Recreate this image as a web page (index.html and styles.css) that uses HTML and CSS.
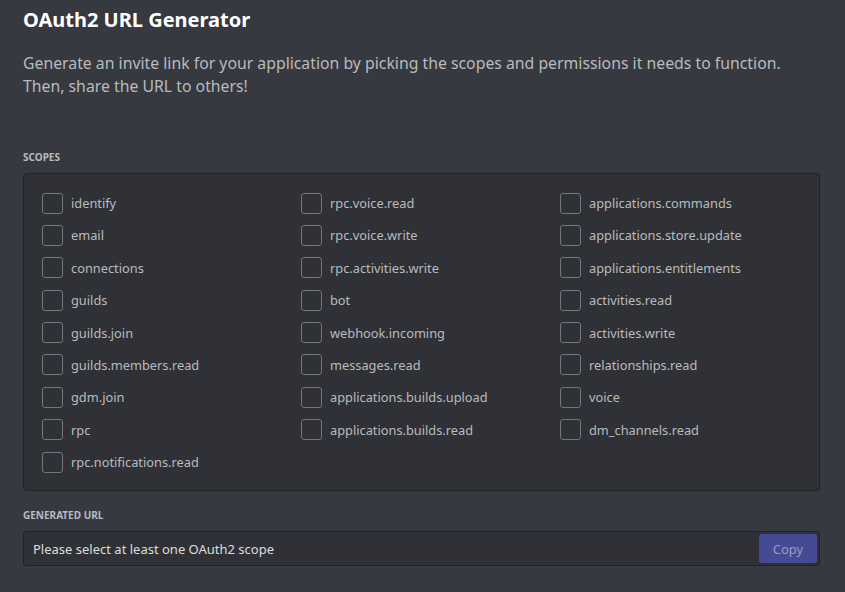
FILE: index.html
```html
<!DOCTYPE html>
<html lang="en">
<head>
  <meta charset="UTF-8" />
  <title>OAuth2 URL Generator</title>
  <link rel="stylesheet" href="styles.css">
</head>
<body>
  <div class="page">
    <h1>OAuth2 URL Generator</h1>
    <p class="desc">Generate an invite link for your application by picking the scopes and permissions it needs to function. Then, share the URL to others!</p>

    <h5 class="section-title scopes-title">Scopes</h5>
    <div class="scopes">
      <label class="scope"><span class="box"></span>identify</label>
      <label class="scope"><span class="box"></span>rpc.voice.read</label>
      <label class="scope"><span class="box"></span>applications.commands</label>
      <label class="scope"><span class="box"></span>email</label>
      <label class="scope"><span class="box"></span>rpc.voice.write</label>
      <label class="scope"><span class="box"></span>applications.store.update</label>
      <label class="scope"><span class="box"></span>connections</label>
      <label class="scope"><span class="box"></span>rpc.activities.write</label>
      <label class="scope"><span class="box"></span>applications.entitlements</label>
      <label class="scope"><span class="box"></span>guilds</label>
      <label class="scope"><span class="box"></span>bot</label>
      <label class="scope"><span class="box"></span>activities.read</label>
      <label class="scope"><span class="box"></span>guilds.join</label>
      <label class="scope"><span class="box"></span>webhook.incoming</label>
      <label class="scope"><span class="box"></span>activities.write</label>
      <label class="scope"><span class="box"></span>guilds.members.read</label>
      <label class="scope"><span class="box"></span>messages.read</label>
      <label class="scope"><span class="box"></span>relationships.read</label>
      <label class="scope"><span class="box"></span>gdm.join</label>
      <label class="scope"><span class="box"></span>applications.builds.upload</label>
      <label class="scope"><span class="box"></span>voice</label>
      <label class="scope"><span class="box"></span>rpc</label>
      <label class="scope"><span class="box"></span>applications.builds.read</label>
      <label class="scope"><span class="box"></span>dm_channels.read</label>
      <label class="scope"><span class="box"></span>rpc.notifications.read</label>
    </div>

    <h5 class="section-title url-title">Generated URL</h5>
    <div class="url-field">
      <span class="url-text">Please select at least one OAuth2 scope</span>
      <button type="button" class="copy-button" disabled>Copy</button>
    </div>
  </div>
</body>
</html>
```

FILE: styles.css
```css
body {
  margin: 0;
  background-color: #36393f;
  font-family: 'Noto Sans', 'Open Sans', sans-serif;
  color: #dcddde;
}
.page {
  padding: 5px 25px 0 23px;
}
h1 {
  margin: 0;
  font-size: 20px;
  line-height: 30px;
  font-weight: bold;
  color: #ffffff;
}
.desc {
  margin: 17px 0 0 0;
  font-size: 15.8px;
  line-height: 23px;
  color: #b9bbbe;
}
.section-title {
  margin: 0 0 8px 0;
  font-size: 10px;
  line-height: 16px;
  font-weight: bold;
  text-transform: uppercase;
  color: #b9bbbe;
}
.scopes-title {
  margin-top: 51px;
}
.url-title {
  margin-top: 16px;
  margin-bottom: 8px;
}
.scopes {
  display: grid;
  grid-template-columns: repeat(3, 259px);
  grid-auto-rows: 24px;
  row-gap: 8.4px;
  padding: 17px 0 16px 18px;
  background-color: #2f3136;
  border: 1px solid #202225;
  border-radius: 4px;
}
.scope {
  display: flex;
  align-items: center;
  gap: 8px;
  font-size: 12.8px;
  color: #b9bbbe;
}
.box {
  box-sizing: border-box;
  width: 21px;
  height: 21px;
  border: 1px solid #72767d;
  border-radius: 3px;
}
.url-field {
  display: flex;
  align-items: center;
  justify-content: space-between;
  height: 35px;
  box-sizing: border-box;
  padding: 0 2px 0 9px;
  background-color: #2f3136;
  border: 1px solid #202225;
  border-radius: 3px;
}
.url-text {
  font-size: 13px;
  color: #dcddde;
}
.copy-button {
  width: 58px;
  height: 29px;
  border: none;
  border-radius: 3px;
  background-color: #444b94;
  color: #9a9cbf;
  font-family: 'Noto Sans', 'Open Sans', sans-serif;
  font-size: 13px;
}
```
